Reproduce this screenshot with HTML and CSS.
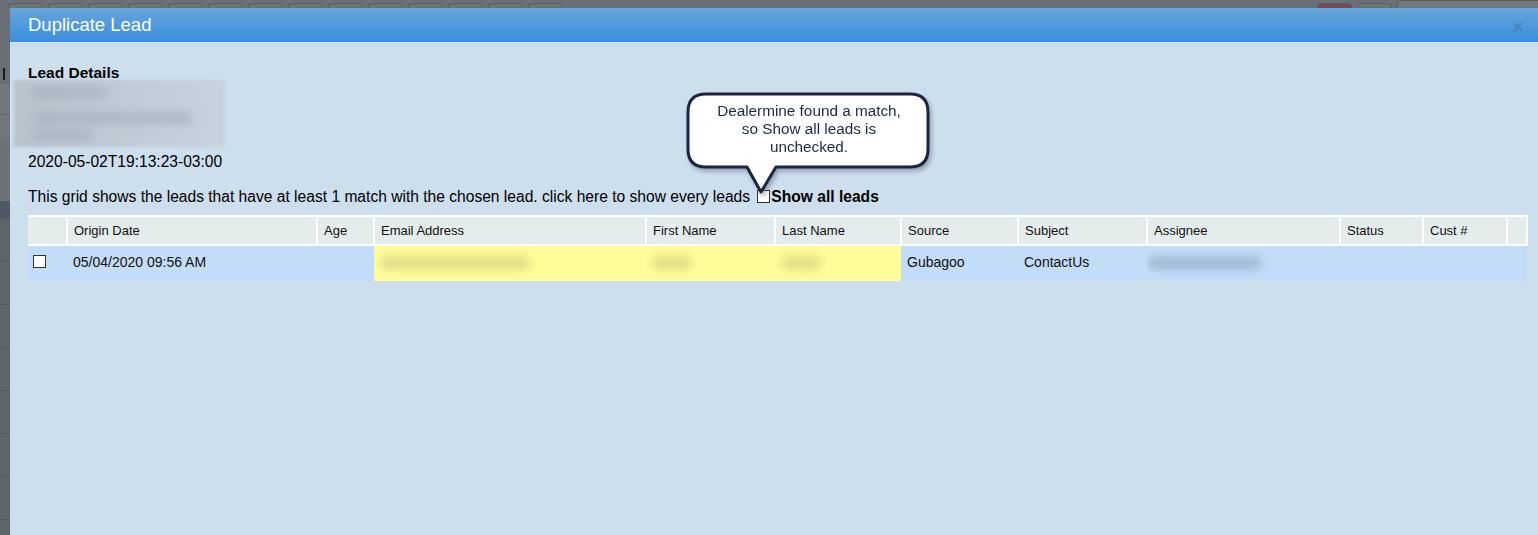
FILE: index.html
```html
<!DOCTYPE html>
<html lang="en">
<head>
    <meta charset="UTF-8">
    <title>Duplicate Lead</title>
    <link rel="stylesheet" href="styles.css">
</head>
<body>
    <div class="backdrop-tabs">
        <span class="tab"></span><span class="tab"></span><span class="tab"></span><span class="tab"></span>
        <span class="tab"></span><span class="tab"></span><span class="tab"></span><span class="tab"></span>
        <span class="tab"></span><span class="tab"></span><span class="tab"></span><span class="tab"></span>
        <span class="tab"></span><span class="tab"></span>
        <span class="tab-spacer"></span>
        <span class="tab tab-red"></span><span class="tab"></span>
        <span class="tab-user"></span>
    </div>

    <div class="screen">
        <div class="side-strip">
            <div class="side-block side-top"></div>
            <div class="side-block side-l"></div>
            <div class="side-block side-gap"></div>
            <div class="side-block side-no"></div>
            <div class="side-block side-mid"></div>
            <div class="side-block side-band"></div>
            <div class="side-block side-rest"></div>
        </div>

        <div class="dialog">
            <div class="dialog-title">
                <span>Duplicate Lead</span>
                <span class="close">&#x2715;</span>
            </div>

            <div class="dialog-body">
                <div class="lead-heading">Lead Details</div>
                <div class="lead-blur">
                    <span class="blur-line bl1"></span>
                    <span class="blur-line bl2"></span>
                    <span class="blur-line bl3"></span>
                </div>
                <div class="lead-date">2020-05-02T19:13:23-03:00</div>

                <div class="grid-note">
                    This grid shows the leads that have at least 1 match with the chosen lead. click here to show every leads
                    <label class="show-all"><span class="box"></span>Show all leads</label>
                </div>

                <table class="leads">
                    <colgroup>
                        <col style="width:39px"><col style="width:250px"><col style="width:57px">
                        <col style="width:272px"><col style="width:129px"><col style="width:126px">
                        <col style="width:117px"><col style="width:129px"><col style="width:193px">
                        <col style="width:83px"><col style="width:84px"><col style="width:20px">
                    </colgroup>
                    <thead>
                        <tr>
                            <th></th>
                            <th>Origin Date</th>
                            <th>Age</th>
                            <th>Email Address</th>
                            <th>First Name</th>
                            <th>Last Name</th>
                            <th>Source</th>
                            <th>Subject</th>
                            <th>Assignee</th>
                            <th>Status</th>
                            <th>Cust #</th>
                            <th></th>
                        </tr>
                    </thead>
                    <tbody>
                        <tr>
                            <td><span class="box"></span></td>
                            <td>05/04/2020 09:56 AM</td>
                            <td></td>
                            <td class="match"><span class="smudge smudge-email"></span></td>
                            <td class="match"><span class="smudge smudge-short"></span></td>
                            <td class="match"><span class="smudge smudge-short"></span></td>
                            <td>Gubagoo</td>
                            <td>ContactUs</td>
                            <td><span class="smudge smudge-blue"></span></td>
                            <td></td>
                            <td></td>
                            <td></td>
                        </tr>
                    </tbody>
                </table>

                <!-- bocadillo sobre el checkbox -->
                <div class="bubble">
                    <svg width="262" height="118" viewBox="0 0 262 118">
                        <path d="M28 9 H232 Q250 9 250 27 V64 Q250 82 232 82 H98 L83 107 L69 82 H28 Q10 82 10 64 V27 Q10 9 28 9 Z"
                              fill="#fff" stroke="#1b2540" stroke-width="3" stroke-linejoin="round"/>
                    </svg>
                    <div class="bubble-text">Dealermine found a match,<br>so Show all leads is<br>unchecked.</div>
                </div>
            </div>
        </div>
    </div>
</body>
</html>
```

FILE: styles.css
```css
body {
    margin: 0;
    height: 535px;
    overflow: hidden;
    background-color: #666a72;
    font-family: 'Liberation Sans', Arial, sans-serif;
    color: #000;
}

/* Pestañas del fondo (oscurecidas) */
.backdrop-tabs {
    height: 8px;
    display: flex;
    align-items: flex-end;
    gap: 5px;
    padding-left: 8px;
    overflow: hidden;
    background-color: #6b6f77;
}

.tab {
    flex: none;
    width: 33px;
    height: 4px;
    border: 1px solid #5a5e66;
    border-bottom: none;
    border-radius: 4px 4px 0 0;
    background-color: #707479;
}

.tab-spacer {
    flex: 1;
}

.tab-red {
    background-color: #7a4a4e;
}

.tab-user {
    flex: none;
    width: 140px;
    height: 7px;
    background-color: #75797f;
    border-top: 1px solid #5a5e66;
    border-left: 1px solid #5a5e66;
    border-radius: 4px 0 0 0;
}

.screen {
    display: flex;
    height: 527px;
}

/* Franja izquierda de la pagina de atras */
.side-strip {
    flex: none;
    width: 10px;
    display: flex;
    flex-direction: column;
    overflow: hidden;
}

.side-top { height: 56px; background-color: #6a6e76; }
.side-l {
    height: 20px;
    background-color: #6a6e76;
    background-image: linear-gradient(to right, #6a6e76 0, #6a6e76 3px, #1a1a1a 3px, #1a1a1a 5px, #6a6e76 5px);
    background-size: 10px 12px;
    background-position: 0 4px;
    background-repeat: no-repeat;
}
.side-gap { height: 30px; background-color: #72767d; border-bottom: 1px solid #62666d; }
.side-no { height: 24px; background-color: #74787e; }
.side-mid { height: 62px; background-color: #6e7278; }
.side-band { height: 18px; background-color: #4f5966; }
.side-rest {
    flex: 1;
    background-color: #60656d;
    background-image: repeating-linear-gradient(to bottom, transparent 0, transparent 42px, #575c63 42px, #575c63 43px);
}

.dialog {
    flex: 1;
    min-width: 0;
    display: flex;
    flex-direction: column;
    position: relative;
    overflow: hidden;
    background-color: #cddeed;
}

.dialog-title {
    height: 34px;
    display: flex;
    align-items: center;
    justify-content: space-between;
    padding: 0 14px 0 18px;
    font-size: 18.5px;
    color: #fff;
    background: linear-gradient(to bottom, #66a5d8, #3a8ee0);
    border-bottom: 1px solid #dde8f2;
}

.close {
    font-size: 14px;
    font-weight: bold;
    color: #4b83bd;
    padding-top: 3px;
}

.dialog-body {
    padding: 21px 18px 0 18px;
    position: relative;
}

.lead-heading {
    font-size: 15.5px;
    font-weight: bold;
    line-height: 18px;
}

.lead-blur {
    position: relative;
    margin: -2px 0 0 -14px;
    width: 211px;
    height: 67px;
    background: linear-gradient(to right, #b7c3cd, #c6d3de);
    filter: blur(1.5px);
}

.blur-line {
    position: absolute;
    left: 18px;
    height: 10px;
    border-radius: 5px;
    background-color: #a8b5c1;
    filter: blur(4px);
}

.bl1 { top: 8px; width: 75px; }
.bl2 { top: 33px; width: 160px; }
.bl3 { top: 50px; width: 60px; }

.lead-date {
    margin-top: 6px;
    font-size: 15.6px;
    line-height: 18px;
}

.grid-note {
    margin-top: 17px;
    font-size: 15.6px;
    line-height: 18px;
}

.show-all {
    font-weight: bold;
}

.box {
    display: inline-block;
    width: 11px;
    height: 11px;
    border: 1px solid #333;
    background-color: #fff;
    vertical-align: -1px;
}

.show-all .box {
    margin-left: 3px;
    margin-right: 1px;
}

.leads {
    margin-top: 9px;
    width: 1499px;
    border-collapse: collapse;
    table-layout: fixed;
    font-size: 13px;
}

.leads th {
    height: 26px;
    padding: 0 0 1px 6px;
    text-align: left;
    font-weight: normal;
    color: #111;
    background-color: #e4ecec;
    border: 2px solid #fff;
    border-left: none;
}

.leads td {
    height: 32px;
    padding: 0 0 3px 6px;
    font-size: 14px;
    color: #111;
    background-color: #c3ddf8;
    white-space: nowrap;
    overflow: hidden;
}

.leads td:first-child {
    padding-left: 5px;
}

.leads td.match {
    background-color: #fffd99;
}

.smudge {
    display: inline-block;
    height: 14px;
    border-radius: 7px;
    vertical-align: middle;
    filter: blur(4px);
}

.smudge-email {
    width: 150px;
    background-color: #e1de88;
}

.smudge-short {
    width: 40px;
    background-color: #e1de88;
}

.smudge-blue {
    width: 115px;
    margin-left: -6px;
    background-color: #a5bad6;
}

/* Bocadillo */
.bubble {
    position: absolute;
    left: 668px;
    top: 42px;
    width: 262px;
    height: 118px;
    filter: drop-shadow(2px 3px 2px rgba(60, 70, 90, 0.4));
}

.bubble svg {
    position: absolute;
    left: 0;
    top: 0;
}

.bubble-text {
    position: relative;
    padding-top: 17px;
    text-align: center;
    font-size: 15.3px;
    line-height: 18px;
    color: #1e2846;
}
```
